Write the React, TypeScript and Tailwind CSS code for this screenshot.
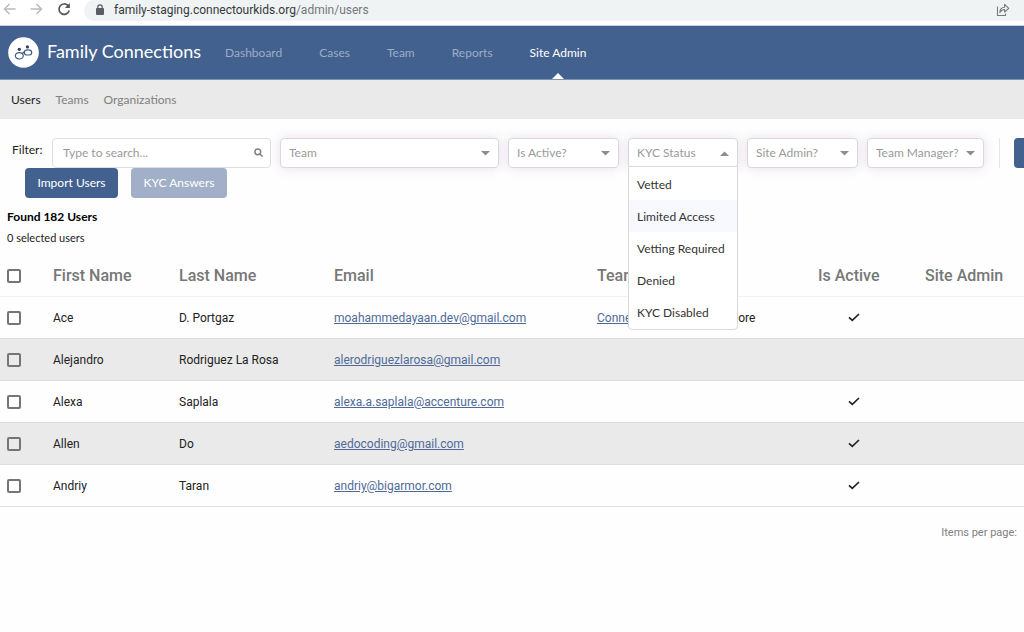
import React, { useState } from 'react';

interface User {
  first: string;
  last: string;
  email: string;
  team?: string;
  active: boolean;
}

const users: User[] = [
  { first: 'Ace', last: 'D. Portgaz', email: 'moahammedayaan.dev@gmail.com', team: 'Connect Our Kids', active: true },
  { first: 'Alejandro', last: 'Rodriguez La Rosa', email: 'alerodriguezlarosa@gmail.com', active: false },
  { first: 'Alexa', last: 'Saplala', email: 'alexa.a.saplala@accenture.com', active: true },
  { first: 'Allen', last: 'Do', email: 'aedocoding@gmail.com', active: true },
  { first: 'Andriy', last: 'Taran', email: 'andriy@bigarmor.com', active: true },
];

const navItems = ['Dashboard', 'Cases', 'Team', 'Reports', 'Site Admin'];
const kycOptions = ['Vetted', 'Limited Access', 'Vetting Required', 'Denied', 'KYC Disabled'];

const filterBox = 'h-[30px] w-full rounded border border-[#d9d9dc] bg-white pl-2 text-left text-[#9a9a9a] shadow-[0_0_12px_rgba(120,60,140,0.16)]';
const checkbox = 'block size-[14px] appearance-none rounded-xs border-2 border-[#757575] bg-transparent checked:bg-[#43618f]';

const Caret = ({ up = false }: { up?: boolean }) => (
  <svg className="pointer-events-none absolute top-[13px] right-[9px] h-[5px] w-[9px] fill-[#8e8e8e]" viewBox="0 0 9 5">
    <path d={up ? 'M0 5L4.5 0.5L9 5Z' : 'M0 0L4.5 4.5L9 0Z'} />
  </svg>
);

const FilterSelect = ({ label, className }: { label: string; className: string }) => (
  <div className={`relative shrink-0 ${className}`}>
    <select aria-label={label} className={`${filterBox} appearance-none`}>
      <option>{label}</option>
      <option>Yes</option>
      <option>No</option>
    </select>
    <Caret />
  </div>
);

const BrowserBar = () => (
  <div className="flex h-[26px] items-start border-b border-[#c9d0da] bg-white">
    <div className="flex h-[18px] w-[84px] shrink-0 items-center gap-[14px] pl-[3px]">
      <button aria-label="Back">
        <svg className="h-[14px] w-[13px]" viewBox="0 0 13 14" fill="none" stroke="#b9bbbe" strokeWidth="1.5">
          <path d="M12.5 7H1.5M6.5 2L1.5 7l5 5" />
        </svg>
      </button>
      <button aria-label="Forward">
        <svg className="h-[14px] w-[13px]" viewBox="0 0 13 14" fill="none" stroke="#b9bbbe" strokeWidth="1.5">
          <path d="M0.5 7h11M6.5 2l5 5-5 5" />
        </svg>
      </button>
      <button aria-label="Reload">
        <svg className="h-[14px] w-[14px]" viewBox="0 0 14 14" fill="none" stroke="#56585c" strokeWidth="1.7">
          <path d="M12.2 8.6A5.2 5.2 0 1 1 10.8 3.4L12 4.6" />
          <path d="M12.9 1v5H7.9Z" fill="#56585c" stroke="none" />
        </svg>
      </button>
    </div>
    <div className="flex h-[21px] flex-1 items-start rounded-l-full bg-[#f0f3f4] pr-[14px] pl-3">
      <svg className="mt-1 h-[11px] w-[8px]" viewBox="0 0 8 11">
        <rect y="4" width="8" height="7" rx="1" fill="#5b5c66" />
        <path d="M1.8 4.5V3a2.2 2.2 0 0 1 4.4 0v1.5" fill="none" stroke="#5b5c66" strokeWidth="1.2" />
      </svg>
      <p className="ml-[10px] flex-1 font-['Roboto',sans-serif] text-[12px] leading-5 text-[#36383c]">
        family-staging.connectourkids.org<span className="text-[#74777b]">/admin/users</span>
      </p>
      <button aria-label="Share" className="mt-[3px]">
        <svg className="h-[14px] w-[14px]" viewBox="0 0 14 14" fill="none" stroke="#77797d" strokeWidth="1.1">
          <path d="M1.5 3.5v9h8v-2" />
          <path d="M3.8 9.5C4 6 6 4.3 8.6 4.2V1.3L12.8 5.3L8.6 9V6.5C6.4 6.5 5 7.5 3.8 9.5Z" strokeLinejoin="round" />
        </svg>
      </button>
    </div>
  </div>
);

const Logo = () => (
  <svg className="size-[31px] shrink-0" viewBox="0 0 31 31">
    <circle cx="15.5" cy="15.5" r="15.3" fill="#fff" />
    <g fill="none" stroke="#3d5a85" strokeWidth="1.2">
      <ellipse cx="11.3" cy="18.8" rx="4" ry="3.2" />
      <ellipse cx="20" cy="15.4" rx="3.7" ry="2.6" />
      <path d="M14.3 16.6c0.8-0.9 1.3-1.5 2.2-1.7" />
    </g>
    <circle cx="11.3" cy="12.3" r="1.6" fill="#2d3f5e" />
    <circle cx="19.4" cy="9.9" r="1.6" fill="#2d3f5e" />
  </svg>
);

const App: React.FC = () => {
  const [kycOpen, setKycOpen] = useState(true);

  return (
    <div className="min-h-screen overflow-hidden bg-[#fefefe] font-['Lato',sans-serif] text-[12px] text-[#222]">
      <BrowserBar />

      {/* Header */}
      <header className="flex h-[54px] items-stretch border-b border-[#7f93b3] bg-[#43618f] pl-2">
        <a href="#" className="flex items-center gap-2 pr-[17px] text-lg text-white">
          <Logo />
          <span className="pb-1 whitespace-nowrap">Family Connections</span>
        </a>
        <nav className="flex">
          {navItems.map((item) => (
            <a
              key={item}
              href="#"
              className={`relative mr-[23px] flex items-center px-[7px] whitespace-nowrap ${item === 'Site Admin' ? 'text-white' : 'text-[#9badc9]'}`}
            >
              {item}
              {item === 'Site Admin' && (
                <svg className="absolute bottom-0 left-1/2 h-[6px] w-[12px] -translate-x-1/2 fill-white" viewBox="0 0 12 6">
                  <path d="M0 6L6 0l6 6Z" />
                </svg>
              )}
            </a>
          ))}
        </nav>
      </header>

      <nav className="flex h-[39px] items-center gap-[15px] bg-[#eaeaea] pt-px pl-[11px] text-[#808080]">
        <a href="#" className="text-[#222]">Users</a>
        <a href="#">Teams</a>
        <a href="#">Organizations</a>
      </nav>

      {/* Filters */}
      <div className="flex gap-[9px] pt-[19px] pl-3">
        <label htmlFor="search" className="w-[31px] shrink-0 pt-[3px] whitespace-nowrap text-[#222]">Filter:</label>
        <div className="relative w-[219px] shrink-0">
          <input
            id="search"
            type="text"
            placeholder="Type to search..."
            className="h-[30px] w-full rounded border border-[#dedee6] bg-white pr-7 pb-px pl-[10px] placeholder:text-[#9a9a9a]"
          />
          <svg className="absolute top-[10px] right-[8px] size-[9px]" viewBox="0 0 9 9" fill="none" stroke="#808080" strokeWidth="1.5">
            <circle cx="3.8" cy="3.8" r="2.9" />
            <path d="M6 6l2.6 2.6" />
          </svg>
        </div>
        <FilterSelect label="Team" className="w-[219px]" />
        <FilterSelect label="Is Active?" className="w-[111px]" />
        <div className="relative w-[110px] shrink-0">
          <button
            aria-haspopup="listbox"
            aria-expanded={kycOpen}
            onClick={() => setKycOpen(!kycOpen)}
            className={filterBox}
          >
            KYC Status
          </button>
          <Caret up={kycOpen} />
          {kycOpen && (
            <ul role="listbox" className="absolute top-[28px] left-0 z-10 w-full rounded-b border border-[#d9d9dc] bg-white py-px">
              {kycOptions.map((option) => (
                <li
                  key={option}
                  role="option"
                  aria-selected={option === 'Limited Access'}
                  className={`flex h-8 items-center pt-px pl-2 whitespace-nowrap text-[#333] ${option === 'Limited Access' ? 'bg-[#f8f8ff]' : ''}`}
                >
                  {option}
                </li>
              ))}
            </ul>
          )}
        </div>
        <FilterSelect label="Site Admin?" className="w-[111px]" />
        <FilterSelect label="Team Manager?" className="w-[117px]" />
        <div className="ml-[6px] h-[30px] w-px shrink-0 bg-[#e6e6e6]" />
        <button aria-label="Apply filters" className="ml-[5px] h-[30px] w-24 shrink-0 rounded bg-[#43618f]" />
      </div>
      <div className="flex gap-[13px] pl-[25px] text-white">
        <button className="h-[30px] w-[93px] rounded bg-[#43618f]">Import Users</button>
        <button disabled className="h-[30px] w-24 rounded bg-[#a1b0c8]">KYC Answers</button>
      </div>

      <div className="pt-[9px] pl-[7px]">
        <h2 className="leading-5 font-bold text-black">Found 182 Users</h2>
        <p className="pt-px text-[11px] leading-5">0 selected users</p>
      </div>

      {/* Users table */}
      <table className="mt-[6px] w-full table-fixed text-left font-['Roboto',sans-serif]">
        <colgroup>
          <col className="w-[53px]" />
          <col className="w-[126px]" />
          <col className="w-[155px]" />
          <col className="w-[263px]" />
          <col className="w-[221px]" />
          <col className="w-[107px]" />
          <col />
        </colgroup>
        <thead>
          <tr className="h-[42px] border-b border-[#f2f2f2] text-base whitespace-nowrap text-[#777] *:pt-[2px]">
            <th className="pl-[7px]">
              <input type="checkbox" aria-label="Select all users" className={checkbox} />
            </th>
            <th className="font-medium">First Name</th>
            <th className="font-medium">Last Name</th>
            <th className="font-medium">Email</th>
            <th className="font-medium">Team</th>
            <th className="font-medium">Is Active</th>
            <th className="font-medium">Site Admin</th>
          </tr>
        </thead>
        <tbody>
          {users.map((user) => (
            <tr key={user.email} className="h-[42px] border-b border-[#dedede] whitespace-nowrap even:bg-[#eaeaea]">
              <td className="pt-[2px] pl-[7px]">
                <input type="checkbox" aria-label={`Select ${user.first}`} className={checkbox} />
              </td>
              <td className="pt-[2px]">{user.first}</td>
              <td className="pt-[2px]">{user.last}</td>
              <td className="pt-[2px]">
                <a href={`mailto:${user.email}`} className="text-[#4f6a98] underline">{user.email}</a>
              </td>
              <td className="pt-[2px]">
                {user.team && (
                  <>
                    <a href="#" className="text-[#4f6a98] underline">{user.team}</a>, and 3 more
                  </>
                )}
              </td>
              <td className="pl-[30px]">
                {user.active && (
                  <svg className="h-[9px] w-[12px]" viewBox="0 0 12 9" fill="none" stroke="#222" strokeWidth="1.7" role="img" aria-label="Active">
                    <path d="M1 4.3L4.3 7.3L11 1" />
                  </svg>
                )}
              </td>
              <td />
            </tr>
          ))}
        </tbody>
      </table>

      <div className="flex justify-end pt-[17px] pr-[7px] font-['Roboto',sans-serif] text-[11px] leading-[18px] text-[#808080]">
        Items per page:
      </div>
    </div>
  );
};

export default App;
